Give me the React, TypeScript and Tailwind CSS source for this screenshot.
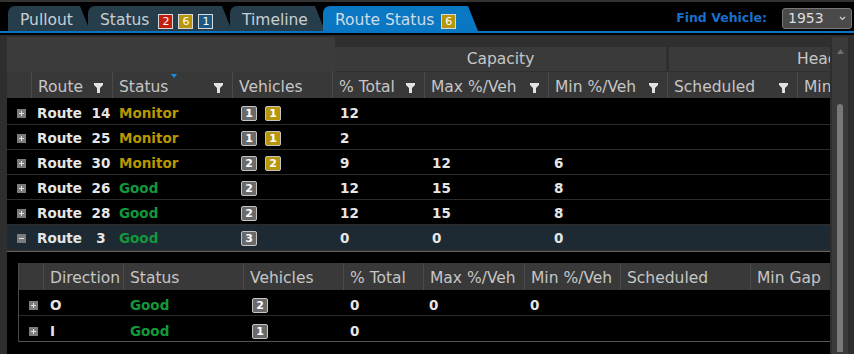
import React from "react";

const MAIN_W = ["w-[25px]", "w-[81px]", "w-[120px]", "w-[100px]", "w-[92px]", "w-[124px]", "w-[119px]", "w-[130px]", "w-[80px]"];
const SUB_W = ["w-[25px]", "w-[80px]", "w-[120px]", "w-[100px]", "w-[80px]", "w-[101px]", "w-[96px]", "w-[130px]", "w-[80px]"];

type Route = {
  n: string;
  status: "Monitor" | "Good";
  veh: string[];
  total: string;
  max: string;
  min: string;
  open?: boolean;
};

const routes: Route[] = [
  { n: "14", status: "Monitor", veh: ["1", "1"], total: "12", max: "", min: "" },
  { n: "25", status: "Monitor", veh: ["1", "1"], total: "2", max: "", min: "" },
  { n: "30", status: "Monitor", veh: ["2", "2"], total: "9", max: "12", min: "6" },
  { n: "26", status: "Good", veh: ["2"], total: "12", max: "15", min: "8" },
  { n: "28", status: "Good", veh: ["2"], total: "12", max: "15", min: "8" },
  { n: "3", status: "Good", veh: ["3"], total: "0", max: "0", min: "0", open: true },
];

function Funnel() {
  return (
    <svg width="9" height="10" viewBox="0 0 9 10" className="shrink-0">
      <path d="M0 0H9V2L6 5V10H3V5L0 2Z" fill="#e2e2e2" />
    </svg>
  );
}

function Expand({ open }: { open?: boolean }) {
  return (
    <svg width="9" height="9" viewBox="0 0 9 9">
      <rect width="9" height="9" fill="#7c7c7c" />
      <path d={open ? "M2 4.5H7" : "M2 4.5H7M4.5 2V7"} stroke="#e4e4e4" strokeWidth="1" />
    </svg>
  );
}

function Badge({ v, gold }: { v: string; gold?: boolean }) {
  return (
    <span
      className={
        "inline-flex h-[15px] w-[16px] items-center justify-center rounded-[2px] border border-[#c4c4c4] text-[11px] font-bold leading-none text-white " +
        (gold ? "bg-[#b8960a]" : "bg-[#6a6a6a]")
      }
    >
      {v}
    </span>
  );
}

function TabBadge({ v, color }: { v: string; color: string }) {
  return (
    <span
      className={
        "inline-flex h-[15px] w-[15px] items-center justify-center border border-[#d8d8d8] text-[11px] leading-none text-white " +
        color
      }
    >
      {v}
    </span>
  );
}

function Tab({ w, active, children }: { w: string; active?: boolean; children: React.ReactNode }) {
  return (
    <div
      className={
        "-ml-[2px] flex h-[25px] shrink-0 items-center rounded-tl-[7px] pl-[12px] pt-[5px] first:ml-0 [clip-path:polygon(0_0,calc(100%_-_10px)_0,100%_100%,0_100%)] " +
        w +
        (active ? " bg-[#0a77c2] text-[#cfdbe6]" : " bg-[#263d4b] text-[#c8cfd3]")
      }
    >
      {children}
    </div>
  );
}

function HeadCell({ i, label, filter, sort, widths }: { i: number; label?: string; filter?: boolean; sort?: boolean; widths: string[] }) {
  return (
    <div
      className={
        "relative flex h-full shrink-0 items-center justify-between border-r border-[#4a4a4a] pl-[6px] pr-[9px] pt-[5px] " + widths[i]
      }
    >
      <span className="whitespace-nowrap">{label}</span>
      {filter && <Funnel />}
      {sort && (
        <svg width="6" height="4" viewBox="0 0 6 4" className="absolute left-[58px] top-[2px]">
          <path d="M0 0H6L3 4Z" fill="#1a8ee0" />
        </svg>
      )}
    </div>
  );
}

export default function App() {
  return (
    <div className="h-[354px] w-[854px] overflow-hidden bg-black font-['DejaVu_Sans',sans-serif]">
      {/* tab strip */}
      <div className="border-t-2 border-[#333]">
        <div className="flex h-[29px] items-end justify-between">
          <div className="flex items-end pl-[8px] text-[15.5px]">
            <Tab w="w-[82px]">Pullout</Tab>
            <Tab w="w-[144px]">
              Status
              <span className="ml-[9px] flex gap-[5px]">
                <TabBadge v="2" color="bg-[#c01e0e]" />
                <TabBadge v="6" color="bg-[#b8960a]" />
                <TabBadge v="1" color="bg-[#1a5a88]" />
              </span>
            </Tab>
            <Tab w="w-[95px]">Timeline</Tab>
            <Tab w="w-[155px]" active>
              Route Status
              <span className="ml-[7px] flex">
                <TabBadge v="6" color="bg-[#b8960a]" />
              </span>
            </Tab>
          </div>
          <div className="flex h-full items-center gap-[15px] pr-[2px] pt-[4px]">
            <span className="text-[12.5px] font-bold text-[#1b6fcc]">Find Vehicle:</span>
            <div className="flex h-[21px] w-[70px] items-center justify-between rounded-[3px] border border-[#777] bg-[#4a4a4a] pl-[5px] pr-[5px] text-[14px] text-[#dddddd]">
              <span>1953</span>
              <svg width="7" height="5" viewBox="0 0 7 5">
                <path d="M1 1L3.5 3.5L6 1" stroke="#cfcfcf" strokeWidth="1.2" fill="none" />
              </svg>
            </div>
          </div>
        </div>
        <div className="h-[2px] bg-[#0a74c4]" />
        <div className="h-[2px] bg-black" />
      </div>

      {/* main panel */}
      <div className="flex h-[319px] bg-[#2e2e2e] pt-[2px]">
        <div className="w-[7px] shrink-0" />
        <div className="flex w-[823px] shrink-0 flex-col overflow-hidden bg-black">
          {/* group header */}
          <div className="flex h-[35px] shrink-0 bg-[#2f2f2f] text-[15.5px] text-[#c6c6c6]">
            <div className="h-full w-[328px] shrink-0 bg-[#3b3b3b]" />
            <div className="mt-[10px] flex h-[24px] w-[331px] shrink-0 items-center justify-center bg-[#3a3a3a] pt-[2px]">
              Capacity
            </div>
            <div className="ml-[3px] mt-[10px] flex h-[24px] w-[200px] shrink-0 items-center bg-[#3a3a3a] pl-[128px] pt-[2px]">
              Headway
            </div>
          </div>
          {/* column header */}
          <div className="flex h-[28px] shrink-0 border-b-2 border-black bg-[#383838] text-[15.5px] text-[#c6c6c6]">
            <HeadCell i={0} widths={MAIN_W} />
            <HeadCell i={1} label="Route" filter widths={MAIN_W} />
            <HeadCell i={2} label="Status" filter sort widths={MAIN_W} />
            <HeadCell i={3} label="Vehicles" widths={MAIN_W} />
            <HeadCell i={4} label="% Total" filter widths={MAIN_W} />
            <HeadCell i={5} label="Max %/Veh" filter widths={MAIN_W} />
            <HeadCell i={6} label="Min %/Veh" filter widths={MAIN_W} />
            <HeadCell i={7} label="Scheduled" filter widths={MAIN_W} />
            <HeadCell i={8} label="Min Gap" widths={MAIN_W} />
          </div>
          {/* rows */}
          {routes.map((r) => (
            <div
              key={r.n}
              className={
                "flex h-[25px] shrink-0 items-center border-b border-[#2c2c2c] pt-[3px] text-[13.5px] font-bold text-[#e6e6e6] " +
                (r.open ? "bg-[#1d2a33]" : "")
              }
            >
              <div className={"flex shrink-0 pl-[10px] " + MAIN_W[0]}>
                <Expand open={r.open} />
              </div>
              <div className={"flex shrink-0 items-center pl-[5px] " + MAIN_W[1]}>
                <span>Route</span>
                <span className="ml-auto mr-[2px] w-[20px] text-center">{r.n}</span>
              </div>
              <div className={"shrink-0 pl-[6px] " + MAIN_W[2] + (r.status === "Good" ? " text-[#12983b]" : " text-[#b99700]")}>
                {r.status}
              </div>
              <div className={"flex shrink-0 gap-[8px] pl-[8px] " + MAIN_W[3]}>
                {r.veh.map((v, k) => (
                  <Badge key={k} v={v} gold={k === 1} />
                ))}
              </div>
              <div className={"shrink-0 pl-[7px] " + MAIN_W[4]}>{r.total}</div>
              <div className={"shrink-0 pl-[7px] " + MAIN_W[5]}>{r.max}</div>
              <div className={"shrink-0 pl-[5px] " + MAIN_W[6]}>{r.min}</div>
            </div>
          ))}
          {/* expanded detail */}
          <div className="h-[1px] shrink-0 bg-[#2c2c2c]" />
          <div className="flex-1 border-t border-[#666] bg-black pl-[11px] pt-[11px]">
            <div className="w-[812px] overflow-hidden border-l border-[#4a4a4a]">
              <div className="flex h-[27px] bg-[#393939] text-[15.5px] text-[#c6c6c6]">
                <HeadCell i={0} widths={SUB_W} />
                <HeadCell i={1} label="Direction" widths={SUB_W} />
                <HeadCell i={2} label="Status" widths={SUB_W} />
                <HeadCell i={3} label="Vehicles" widths={SUB_W} />
                <HeadCell i={4} label="% Total" widths={SUB_W} />
                <HeadCell i={5} label="Max %/Veh" widths={SUB_W} />
                <HeadCell i={6} label="Min %/Veh" widths={SUB_W} />
                <HeadCell i={7} label="Scheduled" widths={SUB_W} />
                <HeadCell i={8} label="Min Gap" widths={SUB_W} />
              </div>
              {[
                { d: "O", v: "2", nums: ["0", "0", "0"], last: false },
                { d: "I", v: "1", nums: ["0", "", ""], last: true },
              ].map((s) => (
                <div
                  key={s.d}
                  className={
                    "flex h-[26px] items-center border-b pt-[5px] text-[13.5px] font-bold text-[#e6e6e6] " +
                    (s.last ? "border-[#555]" : "border-[#2c2c2c]")
                  }
                >
                  <div className={"flex shrink-0 pl-[10px] " + SUB_W[0]}>
                    <Expand />
                  </div>
                  <div className={"shrink-0 pl-[6px] " + SUB_W[1]}>{s.d}</div>
                  <div className={"shrink-0 pl-[6px] text-[#12983b] " + SUB_W[2]}>Good</div>
                  <div className={"flex shrink-0 pl-[8px] " + SUB_W[3]}>
                    <Badge v={s.v} />
                  </div>
                  <div className={"shrink-0 pl-[6px] " + SUB_W[4]}>{s.nums[0]}</div>
                  <div className={"shrink-0 pl-[5px] " + SUB_W[5]}>{s.nums[1]}</div>
                  <div className={"shrink-0 pl-[5px] " + SUB_W[6]}>{s.nums[2]}</div>
                </div>
              ))}
            </div>
          </div>
        </div>
        {/* scrollbar */}
        <div className="ml-[2px] flex w-[16px] shrink-0 flex-col items-center bg-[#3a3a3a] pb-[2px] pt-[12px]">
          <svg width="7" height="5" viewBox="0 0 7 5" className="shrink-0">
            <path d="M0 5H7L3.5 0Z" fill="#6f6f6f" />
          </svg>
          <div className="mt-[50px] w-[6px] flex-1 rounded-t-[3px] bg-[#787878]" />
        </div>
      </div>
    </div>
  );
}
